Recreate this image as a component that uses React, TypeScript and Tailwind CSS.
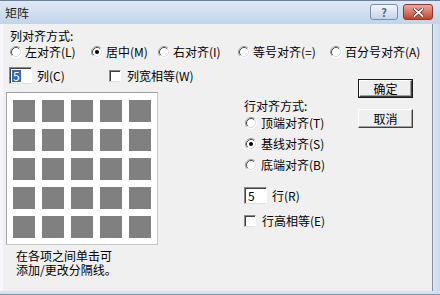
import React from 'react'

const Radio = ({ checked }: { checked?: boolean }) => (
  <svg width="12" height="12" viewBox="0 0 12 12" className="shrink-0">
    <circle cx="6" cy="6" r="5.5" fill="#fff" />
    <path d="M9.89 2.11 A5.5 5.5 0 0 0 2.11 9.89" fill="none" stroke="#9a9a9a" strokeWidth="1" />
    <path d="M9.18 2.82 A4.5 4.5 0 0 0 2.82 9.18" fill="none" stroke="#505050" strokeWidth="1" />
    <path d="M2.11 9.89 A5.5 5.5 0 0 0 9.89 2.11" fill="none" stroke="#ffffff" strokeWidth="1" />
    <path d="M2.82 9.18 A4.5 4.5 0 0 0 9.18 2.82" fill="none" stroke="#dcdcdc" strokeWidth="1" />
    {checked && <circle cx="6" cy="6" r="2" fill="#000" />}
  </svg>
)

const Check = () => (
  <div className="w-[12px] h-[12px] shrink-0 bg-white border border-t-[#8a8a8a] border-l-[#8a8a8a] border-r-white border-b-[#e0e0e0] shadow-[inset_1px_1px_0_0_#404040]" />
)

const NumBox = ({ value, selected }: { value: string; selected?: boolean }) => (
  <div className="w-[23px] h-[17px] shrink-0 bg-white border border-t-[#8a8a8a] border-l-[#8a8a8a] border-r-white border-b-[#e0e0e0] shadow-[inset_1px_1px_0_0_#404040] flex items-center pl-[2px]">
    <span className={`text-[12px] leading-[12px] px-[1px] ${selected ? 'bg-[#3069c8] text-white' : 'text-black'}`}>{value}</span>
  </div>
)

const Button = ({ label, isDefault }: { label: string; isDefault?: boolean }) => (
  <div className={`w-[55px] h-[19px] ${isDefault ? 'border border-[#1a1a1a]' : ''}`}>
    <div className="w-full h-full bg-[#efefef] border border-t-white border-l-white border-r-[#404040] border-b-[#404040] shadow-[inset_-1px_-1px_0_0_#a0a0a0] flex items-center justify-center text-[12px] leading-[13px]">
      {label}
    </div>
  </div>
)

const colAlign = [
  { label: '左对齐(L)', w: 'w-[81px]' },
  { label: '居中(M)', w: 'w-[67px]', checked: true },
  { label: '右对齐(I)', w: 'w-[80px]' },
  { label: '等号对齐(=)', w: 'w-[92px]' },
  { label: '百分号对齐(A)', w: '' },
]

const rowAlign = [
  { label: '顶端对齐(T)' },
  { label: '基线对齐(S)', checked: true },
  { label: '底端对齐(B)' },
]

export default function App() {
  return (
    <div className="w-[440px] h-[295px] flex flex-col bg-[#d3e1f1] text-black font-['Noto_Sans_CJK_SC','Noto_Sans',sans-serif] overflow-hidden">
      {/* title bar */}
      <div className="h-[24px] shrink-0 flex items-start justify-between bg-gradient-to-b from-[#dfe9f5] to-[#c2d4ea] border-t border-[#6b7f98]">
        <span className="ml-[5px] mt-[5px] text-[12px] leading-[13px] text-[#1b1b1b]">矩阵</span>
        <div className="flex mt-[3px] mr-[7px] gap-[5px]">
          <div className="w-[28px] h-[16px] rounded-[3px] border border-[#7d8fa8] bg-gradient-to-b from-[#f2f6fb] to-[#c3d4ea] flex items-center justify-center text-[11px] leading-[11px] font-bold text-[#52647e]">
            ?
          </div>
          <div className="w-[30px] h-[16px] rounded-[3px] border border-[#8a3a30] bg-gradient-to-b from-[#e9a99c] to-[#c3402c] flex items-center justify-center">
            <svg width="11" height="9" viewBox="0 0 11 9">
              <path d="M1.5 1 L9.5 8 M9.5 1 L1.5 8" stroke="#5a2018" strokeWidth="3.2" strokeLinecap="square" />
              <path d="M1.5 1 L9.5 8 M9.5 1 L1.5 8" stroke="#fff" strokeWidth="1.8" strokeLinecap="square" />
            </svg>
          </div>
        </div>
      </div>

      <div className="flex-1 flex min-h-0">
        {/* left frame */}
        <div className="w-[3px] shrink-0 bg-[#f5f7fa]" />
        {/* dialog body */}
        <div className="flex-1 bg-[#f0f0f0] text-[12px] leading-[13px] border-r border-[#7f93ad]">
          <div className="ml-[7px] mt-[5px]">列对齐方式:</div>

          <div className="flex items-center mt-[3px] ml-[7px] h-[13px]">
            {colAlign.map((c) => (
              <div key={c.label} className={`flex items-center gap-[3px] shrink-0 ${c.w}`}>
                <Radio checked={c.checked} />
                <span className="whitespace-nowrap">{c.label}</span>
              </div>
            ))}
          </div>

          <div className="flex mt-[9px] ml-[3px]">
            {/* left column */}
            <div className="w-[238px] shrink-0">
              <div className="flex items-center h-[17px]">
                <div className="w-[100px] flex items-center ml-[3px] gap-[5px]">
                  <NumBox value="5" selected />
                  <span>列(C)</span>
                </div>
                <Check />
                <span className="ml-[6px] whitespace-nowrap">列宽相等(W)</span>
              </div>

              <div className="mt-[8px] w-[152px] h-[153px] bg-white border border-t-[#a0a0a0] border-l-[#a0a0a0] border-r-[#c8c8c8] border-b-[#c8c8c8] pt-[7px] px-[6px]">
                <div className="grid grid-cols-5 gap-[7px]">
                  {Array.from({ length: 25 }).map((_, i) => (
                    <div key={i} className="w-[22px] h-[22px] bg-[#808080]" />
                  ))}
                </div>
              </div>

              <div className="mt-[4px] ml-[10px] leading-[14px] whitespace-pre-line">
                {'在各项之间单击可\n添加/更改分隔线。'}
              </div>
            </div>

            {/* row alignment */}
            <div className="w-[114px] shrink-0 mt-[33px]">
              <div className="h-[12px] leading-[12px]">行对齐方式:</div>
              {rowAlign.map((r) => (
                <div key={r.label} className="h-[21px] flex items-center gap-[4px] ml-[1px]">
                  <Radio checked={r.checked} />
                  <span className="whitespace-nowrap">{r.label}</span>
                </div>
              ))}
              <div className="flex items-center mt-[12px] gap-[5px]">
                <NumBox value="5" />
                <span>行(R)</span>
              </div>
              <div className="flex items-center mt-[10px] h-[13px]">
                <Check />
                <span className="ml-[6px] whitespace-nowrap">行高相等(E)</span>
              </div>
            </div>

            {/* buttons */}
            <div className="flex flex-col gap-[11px] mt-[12px]">
              <Button label="确定" isDefault />
              <Button label="取消" />
            </div>
          </div>
        </div>
        {/* right frame */}
        <div className="w-[7px] shrink-0 bg-gradient-to-r from-[#dae6f4] to-[#c9daee]" />
      </div>
      {/* bottom frame */}
      <div className="h-[4px] shrink-0 bg-[#d3e2f2] border-b border-[#7f93ad]" />
    </div>
  )
}
